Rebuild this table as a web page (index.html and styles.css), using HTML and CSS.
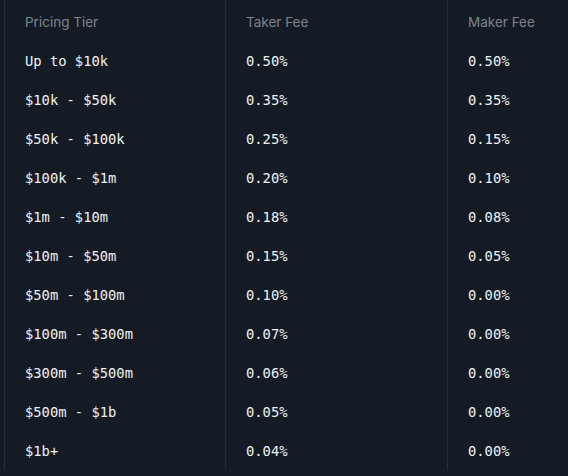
FILE: index.html
```html
<!DOCTYPE html>
<html lang="en">
<head>
<meta charset="utf-8">
<title>Pricing Tiers</title>
<link rel="stylesheet" href="styles.css">
</head>
<body>
<div class="fees">
  <div class="cell head">Pricing Tier</div>
  <div class="cell head">Taker Fee</div>
  <div class="cell head">Maker Fee</div>

  <div class="cell">Up to $10k</div><div class="cell">0.50%</div><div class="cell">0.50%</div>
  <div class="cell">$10k - $50k</div><div class="cell">0.35%</div><div class="cell">0.35%</div>
  <div class="cell">$50k - $100k</div><div class="cell">0.25%</div><div class="cell">0.15%</div>
  <div class="cell">$100k - $1m</div><div class="cell">0.20%</div><div class="cell">0.10%</div>
  <div class="cell">$1m - $10m</div><div class="cell">0.18%</div><div class="cell">0.08%</div>
  <div class="cell">$10m - $50m</div><div class="cell">0.15%</div><div class="cell">0.05%</div>
  <div class="cell">$50m - $100m</div><div class="cell">0.10%</div><div class="cell">0.00%</div>
  <div class="cell">$100m - $300m</div><div class="cell">0.07%</div><div class="cell">0.00%</div>
  <div class="cell">$300m - $500m</div><div class="cell">0.06%</div><div class="cell">0.00%</div>
  <div class="cell">$500m - $1b</div><div class="cell">0.05%</div><div class="cell">0.00%</div>
  <div class="cell">$1b+</div><div class="cell">0.04%</div><div class="cell">0.00%</div>
</div>
</body>
</html>
```

FILE: styles.css
```css
html, body {
  margin: 0;
  padding: 0;
  background: #141b25;
}

.fees {
  margin-left: 4px;
  display: grid;
  grid-template-columns: 221px 222px 1fr;
  grid-template-rows: 41px;
  grid-auto-rows: 39px;
}

.cell {
  border-left: 1px solid #242c37;
  padding-left: 20px;
  display: flex;
  align-items: center;
  font-family: "DejaVu Sans Mono", "Liberation Mono", monospace;
  font-size: 13.8px;
  color: #eef0f2;
  white-space: nowrap;
}

.head {
  font-family: "Inter", "Noto Sans", sans-serif;
  font-size: 13.5px;
  color: #7b838e;
  padding-top: 3px;
}
```
